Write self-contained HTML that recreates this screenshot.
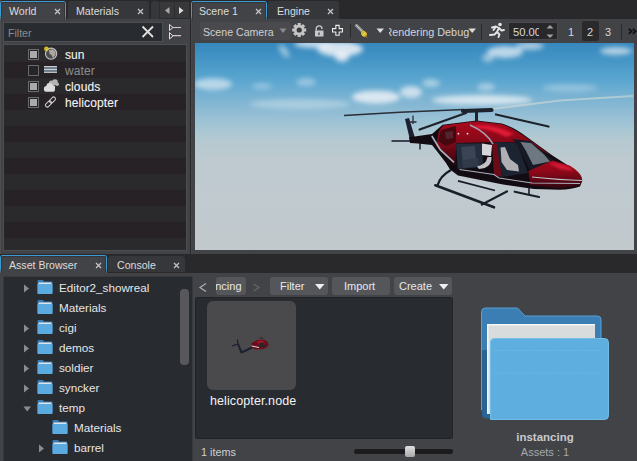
<!DOCTYPE html>
<html><head><meta charset="utf-8">
<style>
*{margin:0;padding:0;box-sizing:border-box}
html,body{width:637px;height:461px;overflow:hidden;background:#29292c;font-family:"Liberation Sans",sans-serif;color:#d8d8d8}
.a{position:absolute}
.panel{background:#414347}
.tab{position:absolute;background:#36373a;border-radius:3px 3px 0 0}
.tab.on{background:#414347;border-top:1px solid #3b9cd4;box-shadow:inset 2px 1px #35363a,inset -2px 0 #35363a}
.tab.on:before,.tab.on:after{content:"";position:absolute;top:0;width:1px;height:100%;background:linear-gradient(#3b9cd4 0%,#3b9cd4 70%,#55585c 100%)}
.tab.on:before{left:0;top:1px;height:calc(100% - 1px)}.tab.on:after{right:0;top:1px;height:calc(100% - 1px)}
.tt{position:absolute;font-size:10.6px;white-space:nowrap;color:#dcdcdc}
.x{position:absolute;font-size:10px;color:#bdbdbd}
.dark{background:#282b30;border:1px solid #4c4e52}
.row{position:absolute;left:0;right:0;height:16px}
.li{position:absolute;font-size:12px;color:#f4f4f4;white-space:nowrap;-webkit-text-stroke:0.1px currentColor;letter-spacing:0.1px}
.cb{position:absolute;width:11px;height:11px;border:1px solid #6a6a6c;background:#262629}
.cb i{position:absolute;left:1px;top:1px;width:7px;height:7px;background:#aaaaac}
.tr{position:absolute;font-size:11.7px;color:#e6e6e6;white-space:nowrap}
.fold{position:absolute;width:16px;height:14px}
.btn{position:absolute;background:#54565a;border-radius:3px;font-size:11px;color:#e8e8e8;white-space:nowrap}
.btn span{top:2.5px!important}
</style></head><body>

<!-- ===== TOP LEFT PANEL (World) ===== -->
<div class="a panel" style="left:0;top:19px;width:190px;height:235px"></div>
<div class="a" style="left:0;top:0;width:1px;height:254px;background:#4e4e52"></div>
<div class="tab on" style="left:0;top:1px;width:66px;height:19px"></div>
<div class="tt" style="left:9px;top:5px">World</div>
<svg class="a" style="left:54px;top:8px" width="7" height="7"><path d="M1 1 L6 6 M6 1 L1 6" stroke="#c4c4c6" stroke-width="1.25"/></svg>
<div class="tab" style="left:68px;top:1px;width:81px;height:18px"></div>
<div class="tt" style="left:76px;top:5px">Materials</div>
<svg class="a" style="left:137px;top:8px" width="7" height="7"><path d="M1 1 L6 6 M6 1 L1 6" stroke="#c4c4c6" stroke-width="1.25"/></svg>
<div class="tab" style="left:151px;top:1px;width:8px;height:18px"></div>
<div class="a" style="left:159px;top:1px;width:31px;height:18px;background:#38383b;border:1px solid #2c2c2f"></div>
<div class="a" style="left:174px;top:1px;width:1px;height:18px;background:#2c2c2f"></div>
<svg class="a" style="left:159px;top:1px" width="31" height="18"><path d="M6 9.5 L10.5 6 L10.5 13 Z" fill="#a8a8a8"/><path d="M20 6 L24.5 9.5 L20 13 Z" fill="#dcdcdc"/></svg>

<!-- filter -->
<div class="a dark" style="left:3px;top:22px;width:160px;height:20px"></div>
<div class="tt" style="left:8px;top:27px;color:#8c8c8c">Filter</div>

<!-- list -->
<div class="a dark" style="left:3px;top:44px;width:184px;height:207px;overflow:hidden"><div class="a" style="left:0;top:1px;width:182px;height:16px;background:#2a2a2c"></div><div class="a" style="left:0;top:17px;width:182px;height:16px;background:#262225"></div><div class="a" style="left:0;top:33px;width:182px;height:16px;background:#2a2a2c"></div><div class="a" style="left:0;top:49px;width:182px;height:16px;background:#262225"></div><div class="a" style="left:0;top:65px;width:182px;height:16px;background:#2a2a2c"></div><div class="a" style="left:0;top:81px;width:182px;height:16px;background:#262225"></div><div class="a" style="left:0;top:97px;width:182px;height:16px;background:#2a2a2c"></div><div class="a" style="left:0;top:113px;width:182px;height:16px;background:#262225"></div><div class="a" style="left:0;top:129px;width:182px;height:16px;background:#2a2a2c"></div><div class="a" style="left:0;top:145px;width:182px;height:16px;background:#262225"></div><div class="a" style="left:0;top:161px;width:182px;height:16px;background:#2a2a2c"></div><div class="a" style="left:0;top:177px;width:182px;height:16px;background:#262225"></div><div class="a" style="left:0;top:193px;width:182px;height:16px;background:#2a2a2c"></div>
</div>
<div class="cb" style="left:28px;top:49px"><i></i></div>
<div class="cb" style="left:28px;top:65px"></div>
<div class="cb" style="left:28px;top:81px"><i></i></div>
<div class="cb" style="left:28px;top:97px"><i></i></div>
<div class="li" style="left:65px;top:48px">sun</div>
<div class="li" style="left:65px;top:64px;color:#8a8a8c">water</div>
<div class="li" style="left:65px;top:80px">clouds</div>
<div class="li" style="left:65px;top:96px">helicopter</div>
<svg class="a" style="left:43px;top:46px" width="17" height="62" viewBox="0 0 17 62">
  <circle cx="8.1" cy="7.7" r="5.6" fill="#4a4a4c" stroke="#c4c4c4" stroke-width="1.1"/>
  <path d="M6 4 L9.5 3.2 L12.5 5.5 L12.5 9 L10 12 L8.5 9 L6.5 8 Z" fill="#a8a8a0"/>
  <circle cx="3.4" cy="2.8" r="2.4" fill="#e0c830" opacity="0.9"/>
  <rect x="1" y="20" width="13" height="7" fill="#5a6670"/>
  <path d="M1 20.6 H14 M1 23.4 H14 M1 26.3 H14" stroke="#d4d8dc" stroke-width="1"/>
  <path d="M1 22 H14 M1 24.8 H14" stroke="#7a8ea0" stroke-width="0.9"/>
  <g fill="#b4b4b4"><circle cx="8.5" cy="37" r="2.6"/><circle cx="12" cy="36" r="2.8"/><circle cx="14.2" cy="38.3" r="1.8"/><rect x="6.5" y="37" width="9" height="2.3" rx="1"/></g>
  <g fill="#dcdcdc"><circle cx="3.5" cy="42.5" r="2.6"/><circle cx="6.5" cy="40" r="3.1"/><circle cx="9.5" cy="41.5" r="2.6"/><rect x="1" y="42" width="11" height="3.8" rx="1.8"/></g>
  <g fill="none" stroke="#d0d0d0" stroke-width="1">
   <rect x="3.6" y="54.5" width="3.8" height="7" rx="1.9" transform="rotate(45 5.5 58)"/>
   <rect x="7.6" y="50.5" width="3.8" height="7" rx="1.9" transform="rotate(45 9.5 54)"/>
  </g>
</svg>
<svg class="a" style="left:140px;top:24px" width="45" height="18" viewBox="0 0 45 18">
  <path d="M2.5 2.5 L13 13 M13 2.5 L2.5 13" stroke="#2a2a2a" stroke-width="3.2"/>
  <path d="M2.5 2.5 L13 13 M13 2.5 L2.5 13" stroke="#e0e0e0" stroke-width="1.8"/>
  <path d="M29.5 0.5 L33 3.5 L29.5 6.5 Z M29.5 8.5 L33 12 L29.5 15 Z" fill="none" stroke="#e0e0e0" stroke-width="1"/>
  <path d="M32 3.5 H41 M32 11.7 H41" stroke="#d8c8c8" stroke-width="1.2"/>
</svg>

<!-- ===== TOP RIGHT PANEL (Scene) ===== -->
<div class="a panel" style="left:191px;top:19px;width:446px;height:235px"></div>
<div class="tab on" style="left:191px;top:1px;width:76px;height:19px"></div>
<div class="tt" style="left:199px;top:5px">Scene 1</div>
<svg class="a" style="left:255px;top:8px" width="7" height="7"><path d="M1 1 L6 6 M6 1 L1 6" stroke="#c4c4c6" stroke-width="1.25"/></svg>
<div class="tab" style="left:268px;top:1px;width:71px;height:18px"></div>
<div class="tt" style="left:277px;top:5px">Engine</div>
<svg class="a" style="left:327px;top:8px" width="7" height="7"><path d="M1 1 L6 6 M6 1 L1 6" stroke="#c4c4c6" stroke-width="1.25"/></svg>

<!-- toolbar -->
<div class="a" style="left:200px;top:22px;width:91px;height:18px;background:#4a4a4e;border-radius:3px"></div>
<div class="tt" style="left:203px;top:26px;color:#cfcfcf">Scene Camera</div>
<svg class="a" style="left:279px;top:28px" width="9" height="6"><path d="M0.5 0.5 H7.5 L4 5 Z" fill="#8a8a8c"/></svg>
<svg class="a" style="left:290px;top:21px" width="60" height="20" viewBox="0 0 60 20">
  <g transform="translate(9.2 9)">
   <g fill="#c4c4c4">
    <circle r="5.2"/>
    <rect x="-1.6" y="-7" width="3.2" height="14"/>
    <rect x="-1.6" y="-7" width="3.2" height="14" transform="rotate(45)"/>
    <rect x="-1.6" y="-7" width="3.2" height="14" transform="rotate(90)"/>
    <rect x="-1.6" y="-7" width="3.2" height="14" transform="rotate(135)"/>
   </g>
   <circle r="2.6" fill="#3a3a3c"/>
  </g>
  <path d="M26.2 9.5 V7.8 A2.9 2.9 0 0 1 32 7.8 V8" fill="none" stroke="#c8c8c8" stroke-width="1.4"/><rect x="31" y="8.3" width="2.5" height="1.2" fill="#414347"/>
  <rect x="25" y="9.5" width="8.5" height="6" fill="#c8c8c8"/>
  <rect x="28" y="11.5" width="2" height="2.5" fill="#707070"/>
  <path d="M45.85 4.35 H49.15 V7.65 H52.45 V10.95 H49.15 V14.25 H45.85 V10.95 H42.55 V7.65 H45.85 Z" fill="#3a3a3e" stroke="#ececec" stroke-width="1.1"/>
</svg>
<div class="a" style="left:350px;top:24px;width:1px;height:14px;background:#2a2a2c"></div>
<svg class="a" style="left:354px;top:24px" width="16" height="15" viewBox="0 0 16 15">
  <path d="M2.5 1.5 L8.5 7.5" stroke="#8a8a8a" stroke-width="3.2" stroke-linecap="round"/>
  <path d="M2 1 L8 7" stroke="#d0d0d0" stroke-width="1"/>
  <ellipse cx="10" cy="9.8" rx="3.2" ry="2.6" transform="rotate(45 10 9.8)" fill="#d8b830"/>
  <path d="M8.5 11.5 L11.5 8.5" stroke="#f0e080" stroke-width="1"/>
  <path d="M11.5 12.5 L13.5 13.5" stroke="#a08020" stroke-width="1"/>
</svg>
<svg class="a" style="left:376px;top:28px" width="9" height="6"><path d="M0.5 0.5 H8 L4.2 5 Z" fill="#dcdcdc"/></svg>
<div class="a" style="left:389px;top:22px;width:80px;height:18px;overflow:hidden">
  <div class="tt" style="left:-4.5px;top:4px;color:#d4d4dc;font-size:10.8px">Rendering Debug</div>
</div>
<svg class="a" style="left:468px;top:28px" width="9" height="6"><path d="M0.5 0.5 H8 L4.2 5 Z" fill="#dcdcdc"/></svg>
<div class="a" style="left:481px;top:24px;width:1px;height:16px;background:#2a2a2c"></div>
<svg class="a" style="left:488px;top:22px" width="17" height="16" viewBox="0 0 17 16">
  <circle cx="12" cy="2.5" r="1.8" fill="#e4e4e4"/>
  <path d="M4 5.5 L8 4.5 L11 6 L9 10 L11.5 12.5 L10.5 15 M9 10 L6.5 12.5 L2 13 M11 6 L13.5 8.5 L16 8 M8 4.5 L5.5 8" fill="none" stroke="#e4e4e4" stroke-width="1.9" stroke-linecap="round" stroke-linejoin="round"/>
</svg>
<div class="a" style="left:508px;top:22px;width:50px;height:18px;background:#28282b;border:1px solid #4a4a4e"></div>
<div class="a" style="left:513px;top:22px;width:26px;height:18px;overflow:hidden"><div class="tt" style="left:0;top:4px;font-size:11.2px;color:#d8d8d8">50.000</div></div>
<svg class="a" style="left:546px;top:24px" width="9" height="15"><path d="M0.5 4.5 L4 1 L7.5 4.5 Z" fill="#a0a0a2"/><path d="M0.5 10.5 L4 14 L7.5 10.5 Z" fill="#a0a0a2"/></svg>
<div class="tt" style="left:568px;top:26px;font-size:11px;color:#d8d8d8">1</div>
<div class="a" style="left:582px;top:21px;width:17px;height:20px;background:#2a2a2d;border-radius:2px"></div>
<div class="tt" style="left:587px;top:26px;font-size:11px;color:#d8d8d8">2</div>
<div class="tt" style="left:605px;top:26px;font-size:11px;color:#d8d8d8">3</div>
<div class="a" style="left:621px;top:24px;width:1px;height:16px;background:#2a2a2c"></div>
<svg class="a" style="left:628px;top:28px" width="9" height="7"><path d="M0.8 0.8 L3.6 3.3 L0.8 5.8 M4.8 0.8 L7.6 3.3 L4.8 5.8" fill="none" stroke="#121214" stroke-width="1.7"/></svg>
<div class="a" style="left:191px;top:19px;width:1px;height:235px;background:#48484c"></div>
<!-- viewport -->
<svg class="a" style="left:195px;top:43px" width="439" height="207" viewBox="195 43 439 207">
 <defs>
  <linearGradient id="sky" x1="0" y1="43" x2="0" y2="250" gradientUnits="userSpaceOnUse">
   <stop offset="0" stop-color="#3587be"/>
   <stop offset="0.106" stop-color="#4a9ac8"/>
   <stop offset="0.179" stop-color="#5aa6d0"/>
   <stop offset="0.251" stop-color="#76b1d2"/>
   <stop offset="0.348" stop-color="#94bed4"/>
   <stop offset="0.42" stop-color="#a8c7d4"/>
   <stop offset="0.469" stop-color="#b5c9d0"/>
   <stop offset="0.565" stop-color="#becad0"/>
   <stop offset="1" stop-color="#c2c9cd"/>
  </linearGradient>
  <filter id="bl" x="-50%" y="-50%" width="200%" height="200%"><feGaussianBlur stdDeviation="2.5"/></filter>
  <filter id="bl2" x="-50%" y="-50%" width="200%" height="200%"><feGaussianBlur stdDeviation="1.2"/></filter>
  <linearGradient id="red" x1="0" y1="0" x2="0" y2="1">
   <stop offset="0" stop-color="#a80a1e"/>
   <stop offset="0.45" stop-color="#880818"/>
   <stop offset="1" stop-color="#300610"/>
  </linearGradient>
 </defs>
 <rect x="195" y="43" width="439" height="207" fill="url(#sky)"/>
 <g filter="url(#bl)" fill="#f2f5f8">
  <ellipse cx="340" cy="49" rx="23" ry="7.5" opacity="0.85"/>
  <ellipse cx="342" cy="57" rx="7" ry="5" opacity="0.8"/>
  <ellipse cx="314" cy="44" rx="20" ry="4" opacity="0.75"/>
  <ellipse cx="284" cy="51" rx="3.5" ry="8" opacity="0.5" transform="rotate(-35 284 51)"/>
  <ellipse cx="505" cy="52" rx="18" ry="6" opacity="0.7"/>
  <ellipse cx="530" cy="46" rx="14" ry="4" opacity="0.6"/>
  <ellipse cx="488" cy="58" rx="6" ry="4" opacity="0.5"/>
  <ellipse cx="616" cy="51" rx="16" ry="4" opacity="0.65"/>
  <ellipse cx="213" cy="84" rx="19" ry="6" opacity="0.6"/>
  <ellipse cx="262" cy="86" rx="10" ry="3" opacity="0.35"/>
  <ellipse cx="306" cy="82" rx="10" ry="4" opacity="0.4"/>
  <ellipse cx="376" cy="97" rx="24" ry="6.5" opacity="0.8"/><ellipse cx="411" cy="92" rx="11" ry="6" opacity="0.7"/>
  <ellipse cx="431" cy="83" rx="9" ry="4" opacity="0.5"/>
  <ellipse cx="486" cy="87" rx="9" ry="4" opacity="0.45"/>
  <ellipse cx="300" cy="104" rx="50" ry="5" opacity="0.35"/>
  <ellipse cx="482" cy="100" rx="50" ry="5" opacity="0.75"/>
  <ellipse cx="570" cy="88" rx="28" ry="4" opacity="0.3"/>
 </g>
 <!-- faint blade streak -->
 <path d="M492 109 L560 100.5 L633 96" stroke="#d8dcd4" stroke-width="2" fill="none" opacity="0.55"/>
 <!-- helicopter -->
 <g>
  <!-- blades -->
  <path d="M344 115.5 L400 112.3 L464 109.5" stroke="#2a2e38" stroke-width="1.5" fill="none"/>
  <path d="M419.7 129.5 L466 113" stroke="#1e222a" stroke-width="2.3" fill="none" stroke-linecap="round"/>
  <path d="M496 114.5 L548.5 126.5" stroke="#1e222a" stroke-width="2.3" fill="none" stroke-linecap="round"/>
  <!-- tail -->
  <path d="M405 119 L409 118 L415 138 L410 140 Z" fill="#1c2030"/>
  <path d="M413 115.5 V124 M410 122 H416.5" stroke="#2a2e38" stroke-width="1.3"/>
  <path d="M391.5 141 H412" stroke="#202430" stroke-width="1.6"/>
  <path d="M420 143 V149.5" stroke="#202430" stroke-width="1.5"/>
  <!-- silhouette -->
  <path d="M409 137 L414.5 136.4 L432 134 L442.6 124.8 L476.5 120.5 L502 123.4 Q513 127 521.7 133.2 L552.8 155.8 L572 168 Q580 174 582.4 180.5 L580 186.5 Q572 189.5 559.6 189.7 L534 189 L503 184.5 L458 175.5 L450 169.5 L446 163 L437 151.25 L432 145 L418 143.4 L410 143 Z" fill="#120c12"/>
  <!-- red upper -->
  <path d="M436 146 L439 131 L443 125.6 L476.5 121.3 L502 124.2 Q512 127.5 521 134 L541 148 L552 156 L526 142.5 L497 142 L456 143 L455.5 166 L447 157 Z" fill="url(#red)"/>
  <path d="M492 143 L498 142 L502 177 L494 175 Z" fill="#6a0c18"/>
  <path d="M441 130 L456 126 L456 142 L446 146 L438 141 Z" fill="#3a0810" opacity="0.85"/>
  <path d="M445 132 L453 131 L453 138 L446 139 Z" fill="#5a2a34" opacity="0.8"/>
  <path d="M474 125.5 Q496 124 514 134 L506 137 Q492 129 476 128 Z" fill="#ff2040" opacity="0.7" filter="url(#bl2)"/>
  <!-- windows -->
  <path d="M456 143.4 L482 143.4 L483 167 L457.7 169 Z" fill="#252e3c"/>
  <path d="M461 147 L475 146 L476 161 L463 163 Z" fill="#3a4454"/>
  <path d="M462 160 L478 158 L479 166 L463 168 Z" fill="#303a48"/>
  <path d="M482 143.4 L492 145 L491 156 L482 155 Z" fill="#d6d6da"/>
  <path d="M477 166.5 Q486 165 487.5 157 L491.5 157 Q492 168 479 169 Z" fill="#c4c4c8"/>
  <path d="M496.3 141.7 L517 143 L528 173 L502 177 Z" fill="#1c2432"/>
  <path d="M500.5 147.4 L505 147 L510 159 L518 165 L519 171.4 L507 170 L501.5 162 Z" fill="#b0b0b4"/>
  <!-- windshield -->
  <path d="M512 139 L530 141 L552.8 160 L546 166 L530 170.5 L516 143 Z" fill="#161a26"/>
  <path d="M520.5 142 L531 143 L544 154.4 L550 161.5 L533 165 L526 151 Z" fill="#6e7882"/>
  <!-- nose -->
  <path d="M528.5 171 L542 165 L552.7 160.6 L570 165.8 Q580 172 582 178 L580 184.8 Q570 188 559.6 188.3 L530 185 Z" fill="url(#red)"/>
  <path d="M548 163 Q566 163 574 171 L560 169 Z" fill="#ff2848" opacity="0.6" filter="url(#bl2)"/>
  <path d="M532 177 Q560 180 582 180.5" stroke="#c0c4cc" stroke-width="1.2" fill="none"/>
  <!-- stripes -->
  <path d="M431.8 136 L440.4 150 L454 162.4" stroke="#a8b0c0" stroke-width="1.7" fill="none"/>
  <path d="M470 125 Q486 132 493 144" stroke="#a8b4c8" stroke-width="1.6" fill="none" opacity="0.85"/>
  <path d="M459.5 169.5 L494 174.5 L499 178 L532 183 L580 183.5" stroke="#aab0bc" stroke-width="1.1" fill="none"/>
  <circle cx="458.4" cy="133.7" r="0.9" fill="#e8e8e8"/><circle cx="467.5" cy="133.7" r="0.9" fill="#e8e8e8"/>
  <!-- skids -->
  <path d="M451 170 Q440 176 437.5 185.5" stroke="#161a24" stroke-width="2.2" fill="none"/>
  <path d="M435.3 185.3 L494 207.3" stroke="#1a1e28" stroke-width="2.6" stroke-linecap="round"/>
  <path d="M481 205 L507.8 191" stroke="#1a1e28" stroke-width="2"/>
  <path d="M457.7 178.3 L495.7 187.8" stroke="#c8ccd2" stroke-width="1.8"/>
  <path d="M458 180.8 L495 190.5" stroke="#161a24" stroke-width="1.8"/>
  <path d="M514.7 191.7 L539 197" stroke="#1a1e28" stroke-width="2.2" stroke-linecap="round"/>
  <path d="M529 187 V195" stroke="#1a1e28" stroke-width="1.6"/>
  <!-- hub -->
  <path d="M463 111 L491.5 110" stroke="#1e222c" stroke-width="4.2" stroke-linecap="round"/>
  <path d="M476.5 112 V121.5" stroke="#1e222c" stroke-width="3"/>
 </g>
</svg>

<!-- ===== BOTTOM ===== -->
<div class="a panel" style="left:0;top:273px;width:637px;height:188px"></div>
<div class="tab on" style="left:0;top:255px;width:107px;height:18px"></div>
<div class="tt" style="left:9px;top:259px">Asset Browser</div>
<div class="tab" style="left:108px;top:256px;width:77px;height:16px"></div>
<div class="tt" style="left:117px;top:259px">Console</div>
<svg class="a" style="left:95px;top:262px" width="7" height="7"><path d="M1 1 L6 6 M6 1 L1 6" stroke="#c4c4c6" stroke-width="1.25"/></svg>
<svg class="a" style="left:173px;top:262px" width="7" height="7"><path d="M1 1 L6 6 M6 1 L1 6" stroke="#c4c4c6" stroke-width="1.25"/></svg>

<div class="a dark" style="left:3px;top:276px;width:190px;height:190px;border-color:#38393d"></div>
<div class="a" style="left:180px;top:289px;width:9px;height:76px;background:#58585c;border-radius:4px"></div>
<svg class="a" style="left:23px;top:284px" width="7" height="9"><path d="M1 0.5 L6 4.5 L1 8.5 Z" fill="#8c8c8e"/></svg><svg class="a" style="left:37px;top:280px" width="16" height="14" viewBox="0 0 16 14"><path d="M0.5 1 Q0.5 0 1.5 0 H6 L7 1.5 H14.5 Q15.5 1.5 15.5 2.5 V13 Q15.5 14 14.5 14 H1.5 Q0.5 14 0.5 13 Z" fill="#3a7db4"/><rect x="1.5" y="2.5" width="13" height="2" fill="#dfe4e8"/><path d="M0.5 4 H15.5 V13 Q15.5 14 14.5 14 H1.5 Q0.5 14 0.5 13 Z" fill="#5cabe0"/></svg><div class="tr" style="left:59px;top:281px">Editor2_showreal</div><svg class="a" style="left:37px;top:300px" width="16" height="14" viewBox="0 0 16 14"><path d="M0.5 1 Q0.5 0 1.5 0 H6 L7 1.5 H14.5 Q15.5 1.5 15.5 2.5 V13 Q15.5 14 14.5 14 H1.5 Q0.5 14 0.5 13 Z" fill="#3a7db4"/><rect x="1.5" y="2.5" width="13" height="2" fill="#dfe4e8"/><path d="M0.5 4 H15.5 V13 Q15.5 14 14.5 14 H1.5 Q0.5 14 0.5 13 Z" fill="#5cabe0"/></svg><div class="tr" style="left:59px;top:301px">Materials</div><svg class="a" style="left:23px;top:324px" width="7" height="9"><path d="M1 0.5 L6 4.5 L1 8.5 Z" fill="#8c8c8e"/></svg><svg class="a" style="left:37px;top:320px" width="16" height="14" viewBox="0 0 16 14"><path d="M0.5 1 Q0.5 0 1.5 0 H6 L7 1.5 H14.5 Q15.5 1.5 15.5 2.5 V13 Q15.5 14 14.5 14 H1.5 Q0.5 14 0.5 13 Z" fill="#3a7db4"/><rect x="1.5" y="2.5" width="13" height="2" fill="#dfe4e8"/><path d="M0.5 4 H15.5 V13 Q15.5 14 14.5 14 H1.5 Q0.5 14 0.5 13 Z" fill="#5cabe0"/></svg><div class="tr" style="left:59px;top:321px">cigi</div><svg class="a" style="left:23px;top:344px" width="7" height="9"><path d="M1 0.5 L6 4.5 L1 8.5 Z" fill="#8c8c8e"/></svg><svg class="a" style="left:37px;top:340px" width="16" height="14" viewBox="0 0 16 14"><path d="M0.5 1 Q0.5 0 1.5 0 H6 L7 1.5 H14.5 Q15.5 1.5 15.5 2.5 V13 Q15.5 14 14.5 14 H1.5 Q0.5 14 0.5 13 Z" fill="#3a7db4"/><rect x="1.5" y="2.5" width="13" height="2" fill="#dfe4e8"/><path d="M0.5 4 H15.5 V13 Q15.5 14 14.5 14 H1.5 Q0.5 14 0.5 13 Z" fill="#5cabe0"/></svg><div class="tr" style="left:59px;top:341px">demos</div><svg class="a" style="left:23px;top:364px" width="7" height="9"><path d="M1 0.5 L6 4.5 L1 8.5 Z" fill="#8c8c8e"/></svg><svg class="a" style="left:37px;top:360px" width="16" height="14" viewBox="0 0 16 14"><path d="M0.5 1 Q0.5 0 1.5 0 H6 L7 1.5 H14.5 Q15.5 1.5 15.5 2.5 V13 Q15.5 14 14.5 14 H1.5 Q0.5 14 0.5 13 Z" fill="#3a7db4"/><rect x="1.5" y="2.5" width="13" height="2" fill="#dfe4e8"/><path d="M0.5 4 H15.5 V13 Q15.5 14 14.5 14 H1.5 Q0.5 14 0.5 13 Z" fill="#5cabe0"/></svg><div class="tr" style="left:59px;top:361px">soldier</div><svg class="a" style="left:23px;top:384px" width="7" height="9"><path d="M1 0.5 L6 4.5 L1 8.5 Z" fill="#8c8c8e"/></svg><svg class="a" style="left:37px;top:380px" width="16" height="14" viewBox="0 0 16 14"><path d="M0.5 1 Q0.5 0 1.5 0 H6 L7 1.5 H14.5 Q15.5 1.5 15.5 2.5 V13 Q15.5 14 14.5 14 H1.5 Q0.5 14 0.5 13 Z" fill="#3a7db4"/><rect x="1.5" y="2.5" width="13" height="2" fill="#dfe4e8"/><path d="M0.5 4 H15.5 V13 Q15.5 14 14.5 14 H1.5 Q0.5 14 0.5 13 Z" fill="#5cabe0"/></svg><div class="tr" style="left:59px;top:381px">syncker</div><svg class="a" style="left:23px;top:406px" width="9" height="7"><path d="M0.5 0.5 H8 L4.2 5.5 Z" fill="#8c8c8e"/></svg><svg class="a" style="left:37px;top:400px" width="16" height="14" viewBox="0 0 16 14"><path d="M0.5 1 Q0.5 0 1.5 0 H6 L7 1.5 H14.5 Q15.5 1.5 15.5 2.5 V13 Q15.5 14 14.5 14 H1.5 Q0.5 14 0.5 13 Z" fill="#3a7db4"/><rect x="1.5" y="2.5" width="13" height="2" fill="#dfe4e8"/><path d="M0.5 4 H15.5 V13 Q15.5 14 14.5 14 H1.5 Q0.5 14 0.5 13 Z" fill="#5cabe0"/></svg><div class="tr" style="left:59px;top:401px">temp</div><svg class="a" style="left:52px;top:420px" width="16" height="14" viewBox="0 0 16 14"><path d="M0.5 1 Q0.5 0 1.5 0 H6 L7 1.5 H14.5 Q15.5 1.5 15.5 2.5 V13 Q15.5 14 14.5 14 H1.5 Q0.5 14 0.5 13 Z" fill="#3a7db4"/><rect x="1.5" y="2.5" width="13" height="2" fill="#dfe4e8"/><path d="M0.5 4 H15.5 V13 Q15.5 14 14.5 14 H1.5 Q0.5 14 0.5 13 Z" fill="#5cabe0"/></svg><div class="tr" style="left:74px;top:421px">Materials</div><svg class="a" style="left:38px;top:444px" width="7" height="9"><path d="M1 0.5 L6 4.5 L1 8.5 Z" fill="#8c8c8e"/></svg><svg class="a" style="left:52px;top:440px" width="16" height="14" viewBox="0 0 16 14"><path d="M0.5 1 Q0.5 0 1.5 0 H6 L7 1.5 H14.5 Q15.5 1.5 15.5 2.5 V13 Q15.5 14 14.5 14 H1.5 Q0.5 14 0.5 13 Z" fill="#3a7db4"/><rect x="1.5" y="2.5" width="13" height="2" fill="#dfe4e8"/><path d="M0.5 4 H15.5 V13 Q15.5 14 14.5 14 H1.5 Q0.5 14 0.5 13 Z" fill="#5cabe0"/></svg><div class="tr" style="left:74px;top:441px">barrel</div>
<div class="a dark" style="left:195px;top:297px;width:258px;height:142px;border-color:#222327;border-radius:2px"></div>
<div class="a" style="left:207px;top:301px;width:89px;height:89px;background:#4a4a4d;border-radius:6px"></div>
<svg class="a" style="left:228px;top:332px" width="44" height="28" viewBox="0 0 44 28">
  <path d="M9.5 7.5 L10 12.5 M4 14 L10 12" stroke="#1a1c24" stroke-width="1.2"/>
  <path d="M10 12 L13.5 20.5 L25 15" stroke="#1c2232" stroke-width="2" fill="none" stroke-linejoin="round"/>
  <path d="M23.5 11 L29 8 L36 7.5 L40 10 L40.5 14 L36 17 L27 17.5 L23 15 Z" fill="#6a0e1c"/>
  <path d="M29 9 L35 8.5 L37 12 L31 13 Z" fill="#a01828"/>
  <path d="M31 11 L36 10.5 L37 15 L32 15 Z" fill="#2a2630"/>
  <path d="M23.5 14 L31 15.5" stroke="#d8d8dc" stroke-width="1"/>
  <path d="M31.5 6 H35" stroke="#22242a" stroke-width="0.9"/>
</svg>
<div class="li" style="left:210px;top:394px;font-size:12.5px;-webkit-text-stroke:0">helicopter.node</div>
<div class="tt" style="left:201px;top:446px;font-size:10.8px;color:#d0d0d4">1 items</div>
<div class="a" style="left:354px;top:449px;width:99px;height:5px;background:#1c1c1e;border-radius:2px"></div>
<div class="a" style="left:405px;top:446px;width:10px;height:11px;background:linear-gradient(#e0e0e0,#a8a8a8);border-radius:2px"></div>
<!-- asset toolbar -->
<svg class="a" style="left:198px;top:282px" width="10" height="11"><path d="M8 1.5 L2 5.5 L8 9.5" fill="none" stroke="#a8b0c0" stroke-width="1.2"/></svg>
<div class="btn" style="left:216px;top:277px;width:30px;height:18px;overflow:hidden;background:#54565a"><span class="a" style="left:-24px;top:2px">instancing</span></div>
<svg class="a" style="left:252px;top:282px" width="10" height="11"><path d="M1.5 2 L7 5.5 L1.5 9" fill="none" stroke="#6a6a6e" stroke-width="1.1"/></svg>
<div class="btn" style="left:270px;top:277px;width:58px;height:18px"><span class="a" style="left:10px;top:2px">Filter</span><svg class="a" style="left:45px;top:7px" width="10" height="6"><path d="M0 0 H9.5 L4.75 5.5 Z" fill="#f0f0f0"/></svg></div>
<div class="btn" style="left:332px;top:277px;width:58px;height:18px"><span class="a" style="left:12px;top:2px">Import</span></div>
<div class="btn" style="left:394px;top:277px;width:58px;height:18px"><span class="a" style="left:5px;top:2px">Create</span><svg class="a" style="left:45px;top:7px" width="10" height="6"><path d="M0 0 H9.5 L4.75 5.5 Z" fill="#f0f0f0"/></svg></div>
<!-- folder preview -->
<svg class="a" style="left:478px;top:305px" width="135" height="118" viewBox="478 305 135 118">
  <path d="M481.5 312 Q481.5 308 485.5 308 H517.5 L525 316 H597.5 Q601 316 601 319.5 V410 H481.5 Z" fill="#3a7eb3" stroke="#58a2d4" stroke-width="1"/>
  <path d="M482 350 V414 Q482 418.5 486 418.5 H490 V350 Z" fill="#2a6494"/>
  <rect x="487" y="324" width="108" height="90" fill="#d9dcdd"/>
  <rect x="487" y="324" width="108" height="1.5" fill="#f6f6f6"/>
  <rect x="487" y="324" width="1.5" height="90" fill="#f6f6f6"/>
  <path d="M490.5 342 Q490.5 338.5 494.5 338.5 H604.5 Q608.5 338.5 608.5 342.5 V415.5 Q608.5 419.5 604.5 419.5 H490.5 Z" fill="#5eafe0" stroke="#74bce8" stroke-width="1"/>
  <path d="M494 350.5 H605 M494 373 H605" stroke="#86c4ea" stroke-width="1" stroke-dasharray="1 2" opacity="0.7"/>
</svg>
<div class="a" style="left:453px;top:420px;width:184px;text-align:center;font-size:11.5px;font-weight:bold;color:#c8c8cc;top:431px">instancing</div>
<div class="a" style="left:453px;width:184px;text-align:center;font-size:11px;color:#a8a8ac;top:446px">Assets : 1</div>

</body></html>
